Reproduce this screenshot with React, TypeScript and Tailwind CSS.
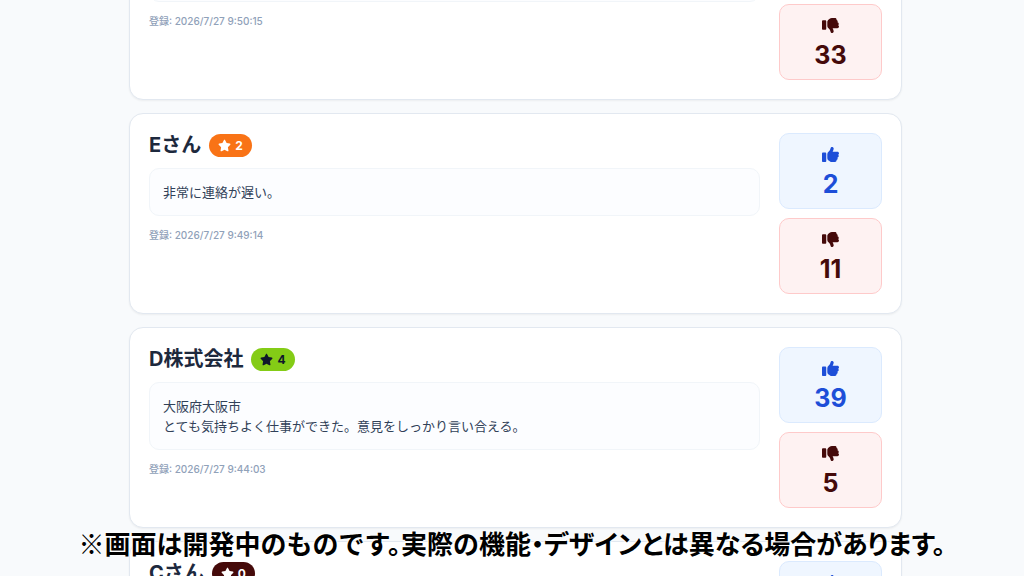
import React from "react";
import { FaStar, FaThumbsDown, FaThumbsUp } from "react-icons/fa6";

interface Review {
  id: number;
  name?: string;
  rating?: number;
  comment?: string;
  createdAt?: string;
  likes?: number;
  dislikes?: number;
}

const reviews: Review[] = [
  { id: 6, createdAt: "2026/7/27 9:50:15", dislikes: 33 },
  { id: 5, name: "Eさん", rating: 2, comment: "非常に連絡が遅い。", createdAt: "2026/7/27 9:49:14", likes: 2, dislikes: 11 },
  {
    id: 4,
    name: "D株式会社",
    rating: 4,
    comment: "大阪府大阪市\nとても気持ちよく仕事ができた。意見をしっかり言い合える。",
    createdAt: "2026/7/27 9:44:03",
    likes: 39,
    dislikes: 5,
  },
  { id: 3, name: "Cさん", rating: 0 },
];

const ratingStyles: Record<number, string> = {
  0: "bg-[#450a0a] text-white",
  2: "bg-[#f97316] text-white",
  4: "bg-[#84cc16] text-slate-900",
};

function RatingBadge({ rating }: { rating: number }) {
  return (
    <span className={`inline-flex h-[23px] items-center gap-1 rounded-full px-[9px] text-xs font-bold ${ratingStyles[rating]}`}>
      <FaStar className="h-[13px] w-[13px]" />
      {rating}
    </span>
  );
}

function VoteButton({ type, count }: { type: "like" | "dislike"; count?: number }) {
  const isLike = type === "like";
  const Icon = isLike ? FaThumbsUp : FaThumbsDown;
  return (
    <button
      type="button"
      aria-label={isLike ? "Like" : "Dislike"}
      className={`flex h-[76px] w-full flex-col items-center gap-[5px] rounded-[10px] border pt-3 ${
        isLike ? "border-blue-100 bg-[#eff6ff] text-[#1d4ed8]" : "border-[#fecaca] bg-[#fef2f2] text-[#450a0a]"
      }`}
    >
      <Icon className="h-[17px] w-[17px]" />
      <span className="text-[25px] font-bold leading-[32px]">{count}</span>
    </button>
  );
}

function ReviewCard({ review }: { review: Review }) {
  return (
    <article className="flex gap-[19px] rounded-[14px] border border-slate-200 bg-white p-[19px] shadow-xs">
      <div className="min-w-0 flex-1">
        <div className="flex h-[25px] items-center gap-2">
          <h2 className="text-xl font-bold leading-[25px] text-slate-800">{review.name}</h2>
          {review.rating !== undefined && <RatingBadge rating={review.rating} />}
        </div>
        <p className="mt-[10px] min-h-12 whitespace-pre-line rounded-[10px] border border-slate-100 bg-[#fcfdff] p-[13px] text-[13px] leading-5 text-slate-700">
          {review.comment}
        </p>
        {review.createdAt && (
          <p className="mt-3 text-[10px] font-medium leading-[15px] text-slate-400">登録: {review.createdAt}</p>
        )}
      </div>
      <div className="flex w-[103px] shrink-0 flex-col gap-[9px]">
        <VoteButton type="like" count={review.likes} />
        <VoteButton type="dislike" count={review.dislikes} />
      </div>
    </article>
  );
}

export default function App() {
  return (
    <div className="relative h-screen overflow-hidden bg-[#f8fafc] font-[Inter,'Noto_Sans_CJK_JP',sans-serif]">
      <main className="-mt-[101px] flex flex-col gap-[13px] pl-[129px] pr-[122px]">
        {reviews.map((review) => (
          <ReviewCard key={review.id} review={review} />
        ))}
      </main>
      <p className="absolute inset-x-0 bottom-[13px] whitespace-nowrap text-center font-['Noto_Sans_CJK_JP',sans-serif] text-[26px] font-bold leading-10 text-black [font-feature-settings:'halt'] [text-shadow:0_0_2px_white,0_0_2px_white,0_0_3px_white]">
        ※画面は開発中のものです。実際の機能・
        <span className="[font-feature-settings:'palt']">デザインとは異なる場合があります。</span>
      </p>
    </div>
  );
}
